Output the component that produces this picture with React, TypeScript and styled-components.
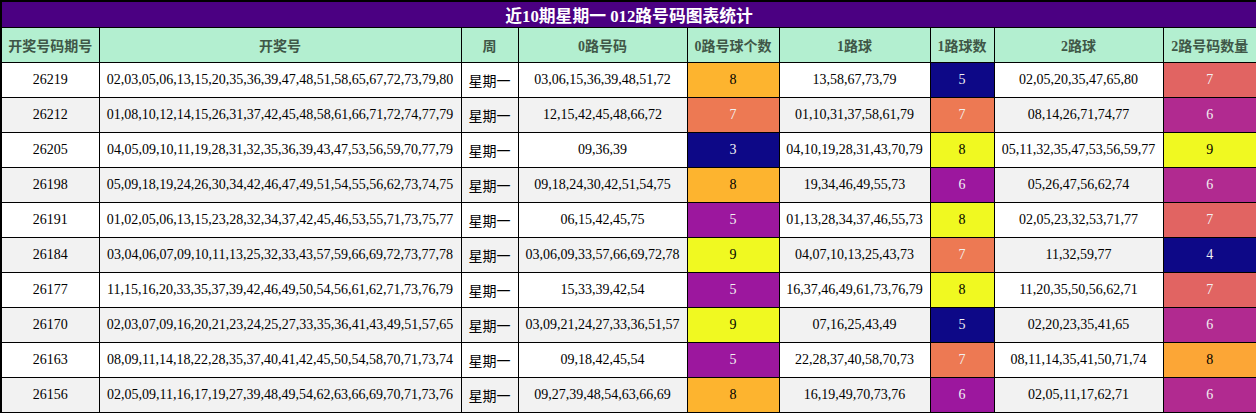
import React from "react";
import styled, { createGlobalStyle } from "styled-components";

const GlobalStyle = createGlobalStyle`
  html, body { margin: 0; padding: 0; background: #ffffff; }
  body { font-family: "Liberation Serif", "Noto Sans CJK SC", serif; }
`;

const Table = styled.table`
  width: 1256px;
  table-layout: fixed;
  border-collapse: collapse;
  border: 2px solid #000;
  font-family: "Liberation Serif", "Noto Sans CJK SC", serif;
  font-size: 14px;
  color: #000;
`;

const TitleCell = styled.th`
  height: 25px;
  padding: 0;
  background: #4b0082;
  color: #ffffff;
  font-size: 16.8px;
  font-weight: bold;
  text-align: center;
  border: 1px solid #000;
`;

const HeadCell = styled.th`
  height: 34px;
  padding: 0;
  background: #b3efd0;
  color: #3f5747;
  font-size: 14px;
  font-weight: bold;
  text-align: center;
  white-space: nowrap;
  border: 1px solid #000;
`;

const Row = styled.tr<{ $alt: boolean }>`
  background: ${(p) => (p.$alt ? "#f2f2f2" : "#ffffff")};
`;

const Cell = styled.td`
  height: 34px;
  padding: 0;
  text-align: center;
  white-space: nowrap;
  border: 1px solid #000;
`;

const CountCell = styled(Cell)<{ $bg: string; $fg: string }>`
  background: ${(p) => p.$bg};
  color: ${(p) => p.$fg};
`;

type Rec = [string, string, string, number, string, number, string, number];

const rows: Rec[] = [
  ["26219", "02,03,05,06,13,15,20,35,36,39,47,48,51,58,65,67,72,73,79,80", "03,06,15,36,39,48,51,72", 8, "13,58,67,73,79", 5, "02,05,20,35,47,65,80", 7],
  ["26212", "01,08,10,12,14,15,26,31,37,42,45,48,58,61,66,71,72,74,77,79", "12,15,42,45,48,66,72", 7, "01,10,31,37,58,61,79", 7, "08,14,26,71,74,77", 6],
  ["26205", "04,05,09,10,11,19,28,31,32,35,36,39,43,47,53,56,59,70,77,79", "09,36,39", 3, "04,10,19,28,31,43,70,79", 8, "05,11,32,35,47,53,56,59,77", 9],
  ["26198", "05,09,18,19,24,26,30,34,42,46,47,49,51,54,55,56,62,73,74,75", "09,18,24,30,42,51,54,75", 8, "19,34,46,49,55,73", 6, "05,26,47,56,62,74", 6],
  ["26191", "01,02,05,06,13,15,23,28,32,34,37,42,45,46,53,55,71,73,75,77", "06,15,42,45,75", 5, "01,13,28,34,37,46,55,73", 8, "02,05,23,32,53,71,77", 7],
  ["26184", "03,04,06,07,09,10,11,13,25,32,33,43,57,59,66,69,72,73,77,78", "03,06,09,33,57,66,69,72,78", 9, "04,07,10,13,25,43,73", 7, "11,32,59,77", 4],
  ["26177", "11,15,16,20,33,35,37,39,42,46,49,50,54,56,61,62,71,73,76,79", "15,33,39,42,54", 5, "16,37,46,49,61,73,76,79", 8, "11,20,35,50,56,62,71", 7],
  ["26170", "02,03,07,09,16,20,21,23,24,25,27,33,35,36,41,43,49,51,57,65", "03,09,21,24,27,33,36,51,57", 9, "07,16,25,43,49", 5, "02,20,23,35,41,65", 6],
  ["26163", "08,09,11,14,18,22,28,35,37,40,41,42,45,50,54,58,70,71,73,74", "09,18,42,45,54", 5, "22,28,37,40,58,70,73", 7, "08,11,14,35,41,50,71,74", 8],
  ["26156", "02,05,09,11,16,17,19,27,39,48,49,54,62,63,66,69,70,71,73,76", "09,27,39,48,54,63,66,69", 8, "16,19,49,70,73,76", 6, "02,05,11,17,62,71", 6],
];

// plasma colormap stops
const plasma: [number, number, number][] = [
  [13, 8, 135], [84, 2, 163], [139, 10, 165], [185, 50, 137],
  [219, 92, 104], [244, 136, 73], [254, 188, 43], [240, 249, 33],
];
const plasmaKnown: Record<string, string> = {
  "0": "#0d0887", "0.333": "#9c179e", "0.4": "#b12a90", "0.6": "#e16462",
  "0.667": "#ed7953", "0.8": "#fca636", "0.833": "#fdb42f", "1": "#f0f921",
};

function lin(c: number) {
  const s = c / 255;
  return s <= 0.03928 ? s / 12.92 : Math.pow((s + 0.055) / 1.055, 2.4);
}

function gradient(v: number, min: number, max: number) {
  const t = max === min ? 0 : (v - min) / (max - min);
  const key = String(Math.round(t * 1000) / 1000);
  let bg = plasmaKnown[key];
  let rgb: [number, number, number];
  if (bg) {
    rgb = [parseInt(bg.slice(1, 3), 16), parseInt(bg.slice(3, 5), 16), parseInt(bg.slice(5, 7), 16)];
  } else {
    const f = t * (plasma.length - 1);
    const i = Math.min(Math.floor(f), plasma.length - 2);
    const r = f - i;
    rgb = [0, 1, 2].map((k) => Math.round(plasma[i][k] + (plasma[i + 1][k] - plasma[i][k]) * r)) as [number, number, number];
    bg = `rgb(${rgb.join(",")})`;
  }
  const lum = 0.2126 * lin(rgb[0]) + 0.7152 * lin(rgb[1]) + 0.0722 * lin(rgb[2]);
  const fg = lum < 0.408 ? "#f1f1f1" : "#000000";
  return { bg, fg };
}

const widths = [98, 362, 57, 169, 92, 151, 64, 169, 94];
const heads = ["开奖号码期号", "开奖号", "周", "0路号码", "0路号球个数", "1路球", "1路球数", "2路球", "2路号码数量"];

function range(idx: 3 | 5 | 7) {
  const vals = rows.map((r) => r[idx] as number);
  return [Math.min(...vals), Math.max(...vals)] as const;
}

export default function App() {
  const r0 = range(3);
  const r1 = range(5);
  const r2 = range(7);
  return (
    <>
      <GlobalStyle />
      <Table>
        <colgroup>
          {widths.map((w, i) => (
            <col key={i} width={w} />
          ))}
        </colgroup>
        <thead>
          <tr>
            <TitleCell colSpan={9}>近10期星期一 012路号码图表统计</TitleCell>
          </tr>
          <tr>
            {heads.map((h) => (
              <HeadCell key={h}>{h}</HeadCell>
            ))}
          </tr>
        </thead>
        <tbody>
          {rows.map((r, i) => {
            const c0 = gradient(r[3], r0[0], r0[1]);
            const c1 = gradient(r[5], r1[0], r1[1]);
            const c2 = gradient(r[7], r2[0], r2[1]);
            return (
              <Row key={r[0]} $alt={i % 2 === 1}>
                <Cell>{r[0]}</Cell>
                <Cell>{r[1]}</Cell>
                <Cell>星期一</Cell>
                <Cell>{r[2]}</Cell>
                <CountCell $bg={c0.bg} $fg={c0.fg}>{r[3]}</CountCell>
                <Cell>{r[4]}</Cell>
                <CountCell $bg={c1.bg} $fg={c1.fg}>{r[5]}</CountCell>
                <Cell>{r[6]}</Cell>
                <CountCell $bg={c2.bg} $fg={c2.fg}>{r[7]}</CountCell>
              </Row>
            );
          })}
        </tbody>
      </Table>
    </>
  );
}
